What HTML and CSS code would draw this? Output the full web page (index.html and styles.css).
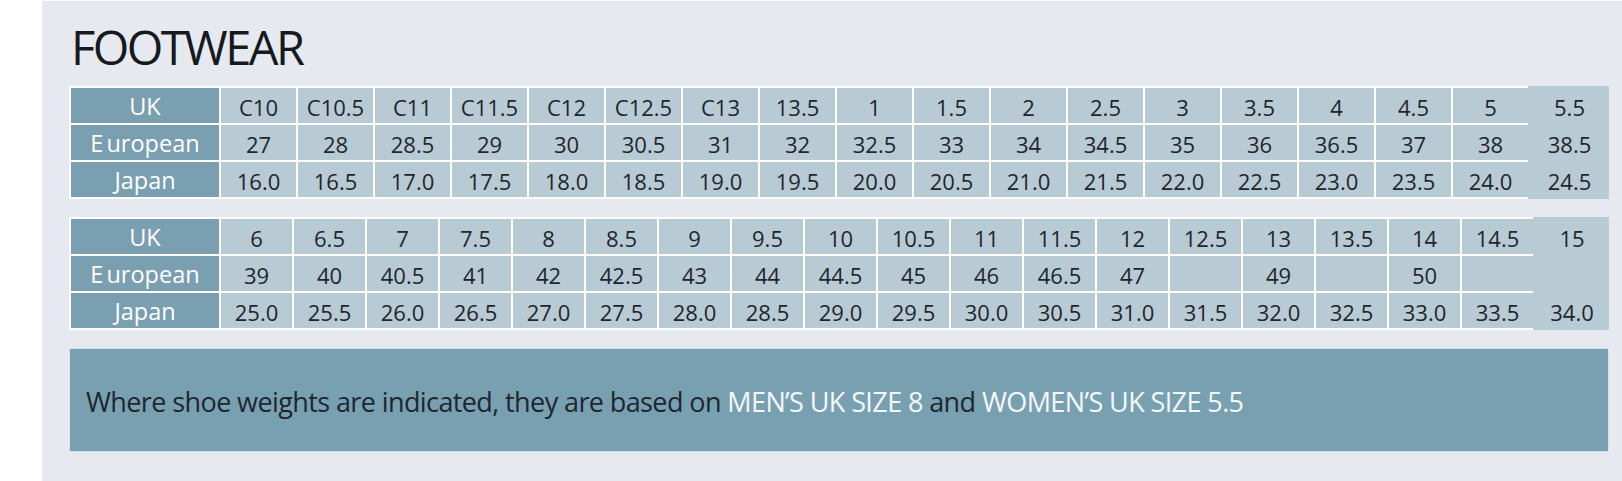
FILE: index.html
```html
<!DOCTYPE html>
<html lang="en">
<head>
<meta charset="utf-8">
<title>Footwear size chart</title>
<link rel="stylesheet" href="styles.css">
</head>
<body>
<div class="panel">
  <h1 class="title">FOOTWEAR</h1>

  <div class="chart chart-a">
    <div class="grid">
      <div class="lbl">UK</div>
      <div class="c">C10</div><div class="c">C10.5</div><div class="c">C11</div><div class="c">C11.5</div><div class="c">C12</div><div class="c">C12.5</div><div class="c">C13</div><div class="c">13.5</div><div class="c">1</div><div class="c">1.5</div><div class="c">2</div><div class="c">2.5</div><div class="c">3</div><div class="c">3.5</div><div class="c">4</div><div class="c">4.5</div><div class="c">5</div>
      <div class="lbl"><span class="e">E</span>uropean</div>
      <div class="c">27</div><div class="c">28</div><div class="c">28.5</div><div class="c">29</div><div class="c">30</div><div class="c">30.5</div><div class="c">31</div><div class="c">32</div><div class="c">32.5</div><div class="c">33</div><div class="c">34</div><div class="c">34.5</div><div class="c">35</div><div class="c">36</div><div class="c">36.5</div><div class="c">37</div><div class="c">38</div>
      <div class="lbl">Japan</div>
      <div class="c">16.0</div><div class="c">16.5</div><div class="c">17.0</div><div class="c">17.5</div><div class="c">18.0</div><div class="c">18.5</div><div class="c">19.0</div><div class="c">19.5</div><div class="c">20.0</div><div class="c">20.5</div><div class="c">21.0</div><div class="c">21.5</div><div class="c">22.0</div><div class="c">22.5</div><div class="c">23.0</div><div class="c">23.5</div><div class="c">24.0</div>
    </div>
    <div class="tail">
      <div class="t">5.5</div><div class="t">38.5</div><div class="t">24.5</div>
    </div>
  </div>

  <div class="chart chart-b">
    <div class="grid">
      <div class="lbl">UK</div>
      <div class="c">6</div><div class="c">6.5</div><div class="c">7</div><div class="c">7.5</div><div class="c">8</div><div class="c">8.5</div><div class="c">9</div><div class="c">9.5</div><div class="c">10</div><div class="c">10.5</div><div class="c">11</div><div class="c">11.5</div><div class="c">12</div><div class="c">12.5</div><div class="c">13</div><div class="c">13.5</div><div class="c">14</div><div class="c">14.5</div>
      <div class="lbl"><span class="e">E</span>uropean</div>
      <div class="c">39</div><div class="c">40</div><div class="c">40.5</div><div class="c">41</div><div class="c">42</div><div class="c">42.5</div><div class="c">43</div><div class="c">44</div><div class="c">44.5</div><div class="c">45</div><div class="c">46</div><div class="c">46.5</div><div class="c">47</div><div class="c"></div><div class="c">49</div><div class="c"></div><div class="c">50</div><div class="c"></div>
      <div class="lbl">Japan</div>
      <div class="c">25.0</div><div class="c">25.5</div><div class="c">26.0</div><div class="c">26.5</div><div class="c">27.0</div><div class="c">27.5</div><div class="c">28.0</div><div class="c">28.5</div><div class="c">29.0</div><div class="c">29.5</div><div class="c">30.0</div><div class="c">30.5</div><div class="c">31.0</div><div class="c">31.5</div><div class="c">32.0</div><div class="c">32.5</div><div class="c">33.0</div><div class="c">33.5</div>
    </div>
    <div class="tail">
      <div class="t">15</div><div class="t"></div><div class="t">34.0</div>
    </div>
  </div>

  <div class="note">
    <p>Where shoe weights are indicated, they are based on <span class="hl">MEN’S UK SIZE 8</span> and <span class="hl">WOMEN’S UK SIZE 5.5</span></p>
  </div>
</div>
</body>
</html>
```
FILE: styles.css
```css
html, body {
  margin: 0;
  padding: 0;
  background: #ffffff;
}

body {
  width: 1622px;
  height: 481px;
  overflow: hidden;
  font-family: "Open Sans", "Noto Sans", sans-serif;
}

.panel {
  box-sizing: border-box;
  margin: 1px 0 0 42px;
  width: 1580px;
  height: 480px;
  background: #e6eaf0;
  padding: 23px 0 0 27px;
  display: flex;
  flex-direction: column;
  align-items: flex-start;
}

.title {
  margin: 0 0 15px 2px;
  font-size: 47px;
  line-height: 47px;
  font-weight: 400;
  letter-spacing: -2.5px;
  color: #161a1d;
}

.chart {
  display: flex;
  align-items: stretch;
}

.chart-b {
  margin-top: 18px;
}

.grid {
  display: grid;
  grid-auto-rows: 35px;
  gap: 2px;
  padding: 2px 0 2px 2px;
  background: #ffffff;
}

.chart-a .grid {
  grid-template-columns: 148px repeat(17, 75px);
}

.chart-b .grid {
  grid-template-columns: 148px repeat(18, 71px);
}

.lbl,
.c,
.t {
  display: flex;
  align-items: center;
  justify-content: center;
  padding-top: 2px;
  box-sizing: border-box;
  font-size: 22px;
  line-height: 1;
}

.lbl {
  background: #7a9fb0;
  color: #ffffff;
  font-size: 23.5px;
}

.lbl .e {
  margin-right: 3px;
}

.c {
  background: #b8cbd4;
  color: #1f262b;
}

.tail {
  display: flex;
  flex-direction: column;
  gap: 2px;
  padding: 2px 0;
  background: #b8cbd4;
}

.chart-a .tail {
  width: 81px;
}

.chart-b .tail {
  width: 76px;
}

.t {
  height: 35px;
  color: #1f262b;
  padding-left: 2px;
}

.note {
  box-sizing: border-box;
  margin-top: 18px;
  width: 1540px;
  height: 104px;
  background: #79a0b0;
  border: 1px solid #d3e3ea;
  display: flex;
  align-items: center;
  padding: 2px 0 0 16px;
}

.note p {
  margin: 0;
  font-size: 27px;
  line-height: 1;
  letter-spacing: -0.6px;
  color: #1d2730;
}

.note .hl {
  color: #f3f8fa;
}
```
